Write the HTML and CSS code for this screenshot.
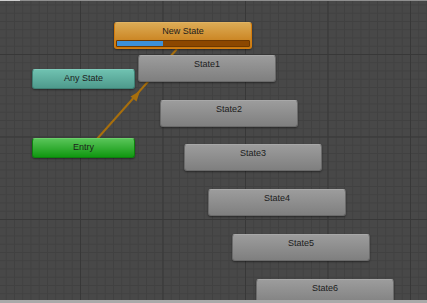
FILE: index.html
```html
<!DOCTYPE html>
<html lang="en">
<head>
  <meta charset="UTF-8" />
  <title>Animator</title>
  <link rel="stylesheet" href="styles.css">
</head>
<body>

  <div class="edge-top"></div>

  <div class="graph">
    <svg class="links" width="427" height="299" viewBox="0 0 427 299">
      <line x1="97" y1="138" x2="177" y2="48" stroke="#a86f0c" stroke-width="2" />
      <polygon points="140,90 130.5,95.5 136.5,100.5" fill="#a86f0c" />
    </svg>

    <div class="node state-default" style="left:114px; top:21px;">
      <span class="label">New State</span>
      <div class="progress"><div class="progress-fill" style="width:35%;"></div></div>
    </div>

    <div class="node small state-any" style="left:32px; top:68px;"><span class="label">Any State</span></div>
    <div class="node small state-entry" style="left:32px; top:137px;"><span class="label">Entry</span></div>

    <div class="node state" style="left:138px; top:54px;"><span class="label">State1</span></div>
    <div class="node state" style="left:160px; top:99px;"><span class="label">State2</span></div>
    <div class="node state" style="left:184px; top:143px;"><span class="label">State3</span></div>
    <div class="node state" style="left:208px; top:188px;"><span class="label">State4</span></div>
    <div class="node state" style="left:232px; top:233px;"><span class="label">State5</span></div>
    <div class="node state" style="left:256px; top:278px;"><span class="label">State6</span></div>
  </div>

  <div class="status-bar"></div>

</body>
</html>
```

FILE: styles.css
```css
body {
  margin: 0;
  width: 427px;
  height: 303px;
  overflow: hidden;
  display: flex;
  flex-direction: column;
  font-family: "Liberation Sans", Arial, sans-serif;
  background: #474747;
}

.edge-top {
  height: 1px;
  background: linear-gradient(to right, #cfcfcf 20px, #8e8e8e 20px);
}

.graph {
  position: relative;
  flex: 1;
  overflow: hidden;
  background-color: #484848;
  background-image:
    linear-gradient(to right, #383838 1px, transparent 1px),
    linear-gradient(to bottom, #383838 1px, transparent 1px),
    linear-gradient(to right, #414141 1px, transparent 1px),
    linear-gradient(to bottom, #414141 1px, transparent 1px);
  background-size: 82.5px 82.5px, 82.5px 82.5px, 8.25px 8.25px, 8.25px 8.25px;
  background-position: 80px 53px;
}

.status-bar {
  height: 3px;
  background: #a9a9a9;
}

.links {
  position: absolute;
  left: 0;
  top: 0;
}

.node {
  position: absolute;
  width: 138px;
  height: 27px;
  box-sizing: border-box;
  border-radius: 3px;
  border: 1px solid #5e5e5e;
  box-shadow: 0 1px 2px rgba(0, 0, 0, 0.45);
  text-align: center;
}

.node.small {
  width: 103px;
  height: 20px;
}

.label {
  display: block;
  padding-top: 3px;
  font-size: 9px;
  line-height: 11px;
  color: #1c1c1c;
}

.state {
  background: linear-gradient(to bottom, #9c9c9c, #7f7f7f);
  border-color: #6a6a6a;
  border-top-color: #a8a8a8;
}

.state-default {
  background: linear-gradient(to bottom, #dcab55, #c4760f);
  border-color: #d57c0c;
  border-top-color: #e2b463;
}

.state-any {
  background: linear-gradient(to bottom, #6fc1b0, #4e9a8c);
  border-color: #3f8074;
  border-top-color: #80cdbd;
}

.state-entry {
  background: linear-gradient(to bottom, #58c458, #109810);
  border-color: #0e7f0e;
  border-top-color: #6ad06a;
}

.progress {
  position: absolute;
  left: 1px;
  right: 1px;
  bottom: 1px;
  height: 5px;
  background: #8c4700;
  border: 1px solid #6e3800;
  border-radius: 1px;
}

.progress-fill {
  height: 100%;
  background: #3d90d8;
}
```
